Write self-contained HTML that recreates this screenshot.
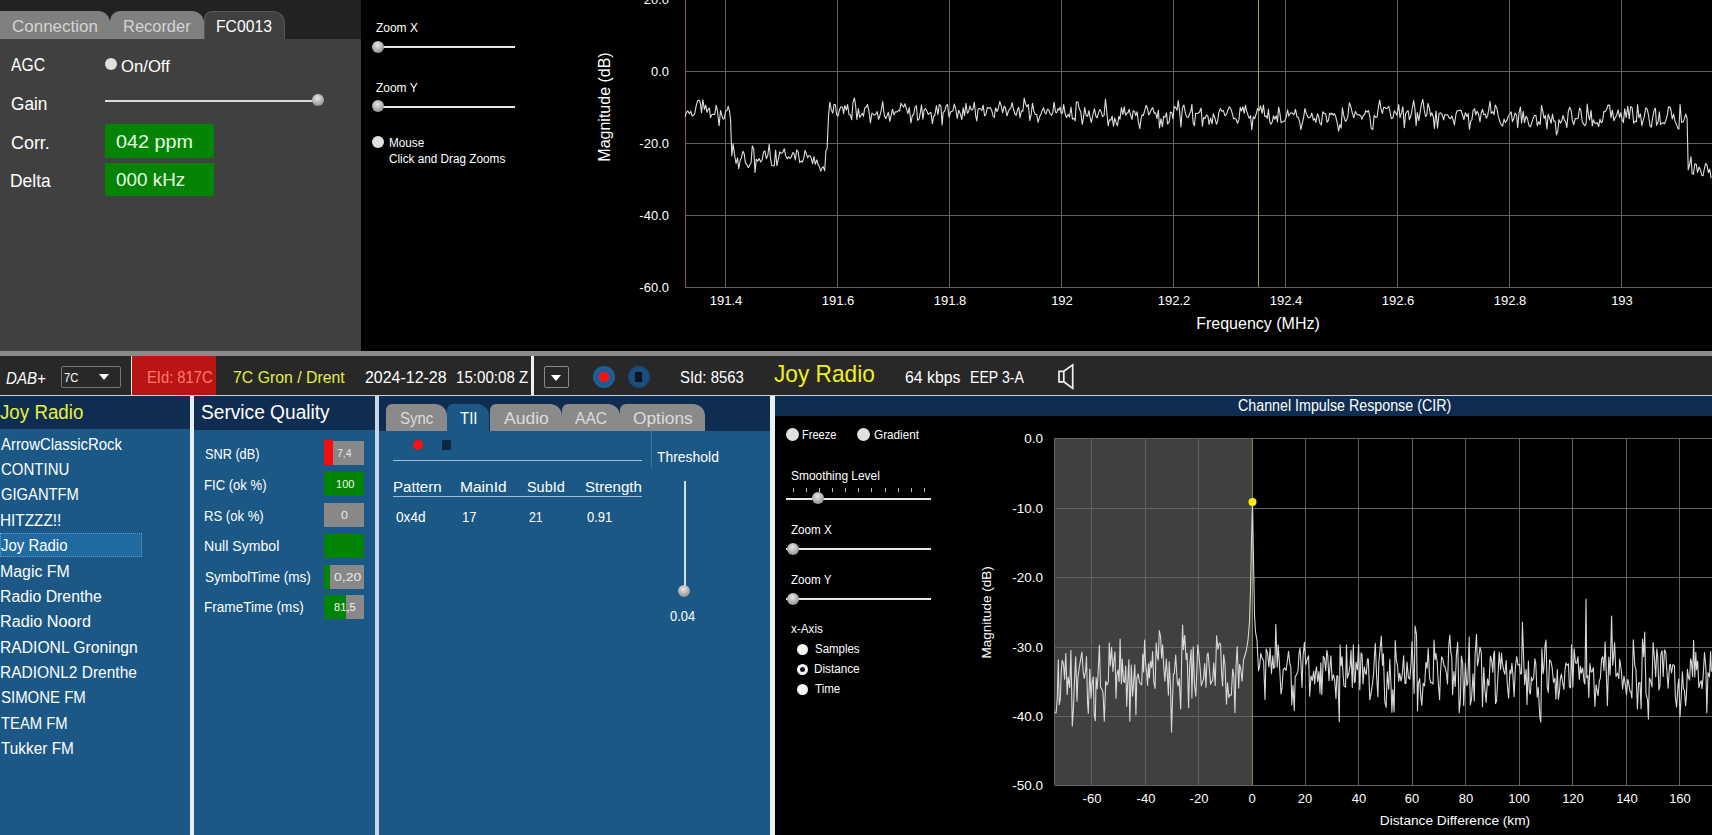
<!DOCTYPE html>
<html><head><meta charset="utf-8">
<style>
*{box-sizing:border-box}
html,body{margin:0;padding:0}
body{width:1712px;height:835px;overflow:hidden;position:relative;background:#000;font-family:"Liberation Sans",sans-serif;color:#fff}
.a{position:absolute}
.t{position:absolute;white-space:nowrap;line-height:1;transform-origin:0 0}
.knob{position:absolute;width:13px;height:13px;border-radius:50%;background:radial-gradient(circle at 45% 35%,#e8e8e8,#9a9a9a 70%,#666);}
.radio{position:absolute;width:13px;height:13px;border-radius:50%;background:#e0e0e0}
.track{position:absolute;height:3px;background:#e6e6e6}
</style></head><body>

<!-- ===== TOP LEFT PANEL ===== -->
<div class="a" style="left:0;top:0;width:361px;height:351px;background:#404040"></div>
<div class="a" style="left:0;top:0;width:361px;height:39px;background:#222"></div>
<div class="a" style="left:0;top:11px;width:110px;height:28px;background:#808080;border-top-right-radius:12px"></div>
<div class="a" style="left:110px;top:11px;width:94px;height:28px;background:#808080;border-top-left-radius:10px;border-top-right-radius:12px"></div>
<div class="a" style="left:204px;top:11px;width:81px;height:28px;background:#404040;border:1px solid #585858;border-bottom:none;border-top-left-radius:8px;border-top-right-radius:12px"></div>

<div class="radio" style="left:105px;top:58px;width:12px;height:12px"></div>
<div class="track" style="left:105px;top:99.5px;width:213px;height:2.2px;background:#dcdcdc"></div>
<div class="knob" style="left:312px;top:94px;width:12px;height:12px"></div>
<div class="a" style="left:105px;top:124px;width:109px;height:34px;background:#048404"></div>
<div class="a" style="left:105px;top:163px;width:109px;height:33px;background:#048404"></div>

<!-- ===== TOP MIDDLE (zoom controls) ===== -->
<div class="track" style="left:378px;top:46px;width:137px;height:2px"></div>
<div class="knob" style="left:372px;top:41px;width:12px;height:12px"></div>
<div class="track" style="left:378px;top:106px;width:137px;height:2px"></div>
<div class="knob" style="left:372px;top:100px;width:12px;height:12px"></div>
<div class="radio" style="left:372px;top:136px;width:12px;height:12px"></div>

<!-- ===== SPECTRUM PLOT ===== -->
<svg class="a" style="left:0;top:0" width="1712" height="351" viewBox="0 0 1712 351">
 <g stroke="#626262" stroke-width="1">
  <line x1="685" y1="71.5" x2="1712" y2="71.5"/>
  <line x1="685" y1="143.5" x2="1712" y2="143.5"/>
  <line x1="685" y1="215.5" x2="1712" y2="215.5"/>
  <line x1="685" y1="287.5" x2="1712" y2="287.5"/>
  <line x1="725.5" y1="0" x2="725.5" y2="287"/>
  <line x1="837.5" y1="0" x2="837.5" y2="287"/>
  <line x1="949.5" y1="0" x2="949.5" y2="287"/>
  <line x1="1061.5" y1="0" x2="1061.5" y2="287"/>
  <line x1="1173.5" y1="0" x2="1173.5" y2="287"/>
  <line x1="1285.5" y1="0" x2="1285.5" y2="287"/>
  <line x1="1397.5" y1="0" x2="1397.5" y2="287"/>
  <line x1="1509.5" y1="0" x2="1509.5" y2="287"/>
  <line x1="1621.5" y1="0" x2="1621.5" y2="287"/>
 </g>
 <line x1="685.5" y1="0" x2="685.5" y2="287" stroke="#a04858" stroke-width="1"/>
 <line x1="1258.5" y1="0" x2="1258.5" y2="287" stroke="#a0a048" stroke-width="1"/>
 <polyline fill="none" stroke="#dedede" stroke-width="1.1" stroke-linejoin="round" points="685.0,116.8 686.5,112.4 687.8,110.9 689.3,113.6 690.8,111.3 692.1,116.0 693.4,115.4 694.7,114.0 696.1,106.2 697.6,100.7 699.2,100.1 700.4,103.5 701.5,112.8 702.8,99.7 704.4,109.4 705.7,105.1 707.0,112.2 708.2,109.6 709.4,108.0 710.5,117.7 711.6,114.9 713.2,114.2 714.7,114.5 716.2,105.2 717.6,112.1 719.1,125.8 720.5,110.5 721.8,115.3 723.0,118.9 724.2,119.0 725.6,111.2 727.1,110.2 728.2,106.4 729.5,110.8 730.6,120.3 731.8,155.9 733.1,143.9 734.5,154.4 736.0,163.5 737.6,157.9 738.7,168.6 740.3,160.0 741.5,157.6 742.9,151.2 744.2,153.8 745.4,162.6 747.0,164.9 748.3,167.5 749.8,165.1 751.1,162.5 752.3,145.9 753.7,148.8 755.0,172.5 756.3,159.2 757.8,161.1 759.1,158.6 760.7,162.1 762.2,159.5 763.7,151.7 764.9,151.1 766.4,158.6 767.8,155.4 769.2,144.2 770.4,157.5 771.7,165.5 772.9,165.8 774.3,165.8 775.6,150.1 776.9,165.7 778.2,160.0 779.8,151.8 781.2,153.4 782.7,152.5 784.3,148.7 785.6,155.4 787.2,158.8 788.7,156.8 790.1,158.4 791.4,157.0 792.6,152.9 793.8,152.8 795.3,160.0 796.7,149.8 798.1,151.8 799.7,162.7 801.1,161.0 802.3,162.2 803.6,158.9 805.1,150.4 806.2,153.1 807.7,157.8 809.1,155.5 810.2,155.9 811.3,158.5 812.6,163.7 814.0,156.5 815.3,164.3 816.8,159.9 818.0,164.0 819.4,166.8 820.8,171.1 822.0,167.9 823.2,166.7 824.7,170.8 825.9,150.5 827.1,148.7 828.5,116.1 829.8,102.2 831.3,109.7 832.8,113.3 834.0,104.3 835.4,104.8 836.5,114.3 838.0,116.2 839.5,109.9 840.9,106.8 842.5,107.0 843.6,113.6 844.8,105.5 846.4,110.1 847.6,104.5 849.0,114.8 850.3,114.7 851.7,119.8 853.0,102.2 854.4,97.9 855.6,105.7 856.9,119.5 858.4,108.5 859.7,117.5 861.1,115.2 862.3,113.3 863.5,116.3 864.7,107.9 866.2,107.3 867.4,104.5 868.9,110.8 870.4,122.9 871.9,113.2 873.4,114.4 874.7,115.1 876.0,113.9 877.2,111.6 878.6,119.4 880.1,115.0 881.3,109.8 882.7,101.6 884.3,115.5 885.9,118.5 887.2,115.4 888.4,112.2 889.8,121.4 891.2,115.2 892.5,109.2 894.0,114.8 895.3,111.9 896.7,112.0 898.3,110.6 899.6,111.1 901.0,103.4 902.2,105.4 903.7,107.1 904.9,103.8 906.5,108.9 907.9,113.6 909.3,107.6 910.9,123.0 912.4,115.3 913.7,114.5 915.0,107.1 916.4,105.9 917.6,120.3 919.1,118.8 920.3,112.8 921.5,104.8 922.9,119.2 924.1,110.1 925.4,108.5 926.9,111.0 928.2,114.4 929.6,113.3 930.9,112.4 932.4,123.7 933.6,116.5 934.8,115.3 936.4,105.5 937.9,114.7 939.3,104.3 940.9,106.2 942.1,124.9 943.2,112.3 944.6,111.4 946.1,106.2 947.5,104.4 949.1,117.2 950.5,112.1 951.7,111.4 952.9,110.8 954.3,104.1 955.9,109.4 957.2,118.5 958.8,110.2 960.3,113.9 961.8,119.6 963.2,107.7 964.5,115.6 966.0,103.4 967.3,113.2 968.5,111.8 970.0,105.8 971.4,110.1 973.0,109.0 974.3,102.2 975.7,115.8 976.8,120.9 978.2,108.8 979.3,108.6 980.7,109.1 981.9,110.3 983.1,105.0 984.6,115.9 985.9,114.5 987.4,107.4 988.9,108.3 990.3,107.6 991.7,110.4 993.0,116.0 994.3,117.5 995.6,107.7 997.1,111.5 998.4,107.9 999.7,101.5 1001.2,105.8 1002.6,112.8 1004.1,106.1 1005.5,108.1 1007.0,115.9 1008.3,111.5 1009.5,109.4 1010.8,108.1 1012.2,102.7 1013.6,110.0 1015.1,114.3 1016.3,115.2 1017.7,109.1 1018.8,107.4 1020.0,117.6 1021.5,110.7 1022.9,111.3 1024.2,98.1 1025.6,104.0 1026.8,106.9 1028.3,104.5 1029.8,120.4 1031.1,115.0 1032.5,103.4 1034.0,111.6 1035.4,114.4 1036.7,114.5 1038.1,122.3 1039.7,116.4 1041.0,114.4 1042.1,110.6 1043.6,107.7 1044.8,112.6 1046.0,113.8 1047.4,109.2 1048.8,110.2 1050.3,114.0 1051.6,115.4 1052.9,111.6 1054.1,102.0 1055.5,112.3 1056.7,112.8 1057.9,108.6 1059.0,110.1 1060.2,107.1 1061.3,113.8 1062.5,112.7 1063.7,104.6 1065.0,113.6 1066.5,117.6 1068.1,114.2 1069.5,117.0 1071.0,107.0 1072.4,119.2 1074.0,118.3 1075.2,120.8 1076.3,102.0 1077.9,102.1 1079.3,108.8 1080.7,111.8 1082.3,124.5 1083.5,117.4 1084.7,107.5 1086.1,115.3 1087.6,116.4 1088.9,110.7 1090.1,117.9 1091.3,122.4 1092.9,115.0 1094.4,108.7 1096.0,116.7 1097.1,117.8 1098.3,113.4 1099.8,109.4 1101.0,111.6 1102.6,116.6 1104.0,115.6 1105.5,99.0 1106.9,113.4 1108.2,125.8 1109.4,119.7 1110.9,120.1 1112.1,116.1 1113.5,126.2 1114.7,118.0 1116.1,122.7 1117.4,125.8 1118.9,116.4 1120.0,119.2 1121.4,107.6 1122.9,114.4 1124.2,106.8 1125.6,115.3 1126.8,113.1 1128.0,112.8 1129.2,109.3 1130.5,114.6 1132.0,119.3 1133.2,110.8 1134.6,111.4 1135.8,115.6 1137.1,111.7 1138.2,120.9 1139.8,128.6 1140.9,119.7 1142.1,114.7 1143.3,115.5 1144.8,110.4 1146.1,105.3 1147.4,108.2 1148.7,114.9 1149.8,113.4 1151.4,109.3 1152.8,107.6 1154.2,113.1 1155.6,112.9 1157.0,118.4 1158.4,110.2 1159.5,127.9 1161.0,118.7 1162.4,126.7 1163.7,116.4 1165.0,117.2 1166.5,112.9 1167.6,124.0 1169.2,121.9 1170.4,112.0 1171.9,112.7 1173.0,118.6 1174.2,106.4 1175.8,107.8 1177.0,110.2 1178.3,100.6 1179.7,112.5 1180.9,126.9 1182.4,107.9 1183.9,105.0 1185.4,113.4 1186.9,117.1 1188.3,117.3 1189.6,113.7 1190.8,111.3 1191.9,104.4 1193.1,122.8 1194.4,125.8 1195.6,113.3 1196.9,113.5 1198.1,113.2 1199.6,112.0 1201.1,108.0 1202.4,126.3 1203.6,117.5 1204.9,118.7 1206.5,115.0 1207.9,116.2 1209.1,124.4 1210.6,118.1 1212.1,123.8 1213.3,113.7 1214.8,117.7 1216.4,124.2 1217.5,121.7 1218.9,112.4 1220.3,108.6 1221.9,111.3 1223.4,110.6 1224.9,115.7 1226.5,114.4 1227.8,110.3 1229.4,106.7 1231.0,109.2 1232.3,113.6 1233.6,118.9 1234.9,118.2 1236.1,119.3 1237.5,123.2 1239.0,119.4 1240.2,107.2 1241.4,111.0 1242.9,106.7 1244.2,113.3 1245.4,105.3 1246.8,111.6 1248.1,115.4 1249.2,118.3 1250.6,115.7 1251.8,129.8 1253.2,116.7 1254.7,118.7 1256.3,113.5 1257.5,108.5 1259.1,110.6 1260.5,105.8 1262.1,113.4 1263.4,105.0 1264.9,116.6 1266.2,115.9 1267.3,118.5 1268.4,109.3 1269.7,121.4 1270.8,124.2 1272.1,122.4 1273.6,115.7 1274.8,119.2 1276.3,115.8 1277.5,121.9 1278.6,107.0 1279.7,112.1 1281.1,122.6 1282.3,121.9 1283.6,121.4 1284.7,120.9 1286.2,117.2 1287.6,109.9 1288.8,116.1 1290.4,113.3 1291.8,112.7 1292.9,113.8 1294.0,114.7 1295.5,109.4 1297.0,117.2 1298.2,117.2 1299.7,121.9 1300.9,129.6 1302.2,123.7 1303.6,117.8 1304.9,108.5 1306.3,113.5 1307.9,117.0 1309.1,117.9 1310.7,116.7 1311.8,113.0 1313.4,120.3 1314.6,118.4 1315.9,122.2 1317.5,113.7 1318.7,116.6 1320.0,123.4 1321.4,124.9 1322.8,111.7 1324.3,113.6 1325.7,113.8 1327.1,122.3 1328.4,120.4 1329.7,113.0 1330.9,114.7 1332.0,113.1 1333.3,115.3 1334.5,113.6 1335.7,116.5 1337.3,123.3 1338.6,131.2 1339.9,124.5 1341.1,128.1 1342.4,107.9 1343.9,116.5 1345.4,121.4 1346.7,119.9 1347.9,116.3 1349.3,102.8 1350.7,106.2 1352.3,112.9 1353.8,117.8 1355.4,111.4 1356.9,114.3 1358.3,115.1 1359.5,114.9 1360.8,115.9 1361.9,119.3 1363.5,115.0 1364.6,114.5 1365.8,110.5 1367.2,112.2 1368.5,110.5 1369.9,116.9 1371.2,128.3 1372.8,129.7 1374.2,115.2 1375.8,117.4 1377.1,117.0 1378.6,105.6 1379.7,100.1 1380.8,108.0 1382.4,113.5 1383.6,107.4 1384.8,107.4 1386.1,108.6 1387.3,108.2 1388.8,106.3 1390.0,111.8 1391.4,118.7 1392.9,118.1 1394.3,110.7 1395.7,112.9 1397.1,115.3 1398.7,104.5 1400.0,117.7 1401.5,112.9 1402.9,106.7 1404.3,127.8 1405.6,113.7 1406.9,111.8 1408.1,110.6 1409.4,119.7 1411.0,115.3 1412.6,106.4 1413.7,100.5 1414.9,108.6 1416.1,125.7 1417.3,112.5 1418.8,120.7 1420.1,112.5 1421.2,105.1 1422.8,99.4 1424.3,110.4 1425.6,116.5 1426.8,115.0 1427.9,103.3 1429.4,108.2 1430.6,116.1 1431.8,112.7 1433.3,116.9 1434.4,128.4 1436.0,111.0 1437.5,128.0 1439.1,113.4 1440.6,112.8 1442.1,114.4 1443.6,119.9 1444.8,114.7 1446.2,115.0 1447.8,114.9 1449.0,117.8 1450.5,118.7 1451.8,115.9 1453.3,120.2 1454.4,125.0 1456.0,114.0 1457.1,110.8 1458.4,110.7 1459.8,110.3 1461.0,110.4 1462.4,114.5 1463.9,119.7 1465.4,112.7 1467.0,116.5 1468.2,113.6 1469.4,129.3 1470.8,121.0 1471.9,119.8 1473.1,110.9 1474.6,108.7 1475.8,114.9 1477.1,111.2 1478.4,113.6 1480.0,121.8 1481.2,113.0 1482.5,109.3 1483.7,114.7 1485.2,113.9 1486.4,118.3 1487.7,115.4 1488.8,108.9 1490.0,101.4 1491.2,113.5 1492.8,111.7 1494.0,114.6 1495.3,105.1 1496.8,107.9 1498.2,115.9 1499.8,121.6 1501.4,124.9 1502.6,126.1 1504.1,119.1 1505.4,122.5 1506.8,120.6 1508.3,116.2 1509.9,114.0 1511.2,111.9 1512.4,121.6 1513.6,119.0 1515.1,113.1 1516.6,115.2 1517.7,127.7 1519.1,112.3 1520.5,107.0 1521.6,123.1 1523.2,111.4 1524.5,122.7 1526.1,116.2 1527.4,118.5 1528.9,125.3 1530.3,126.9 1531.5,123.8 1533.1,118.4 1534.5,115.6 1535.9,115.3 1537.3,125.7 1538.7,121.7 1540.2,124.5 1541.5,105.6 1542.8,111.2 1544.1,118.4 1545.4,115.5 1546.9,128.9 1548.2,114.3 1549.7,118.4 1551.1,123.3 1552.5,114.0 1553.7,120.9 1555.1,121.2 1556.5,134.9 1557.8,130.8 1559.0,119.6 1560.5,123.0 1561.6,121.4 1563.1,115.5 1564.4,120.4 1565.5,121.4 1566.9,127.5 1568.2,112.0 1569.7,107.2 1571.2,110.7 1572.3,119.9 1573.7,124.8 1575.3,118.5 1576.7,118.7 1578.2,118.1 1579.5,108.1 1580.8,109.9 1582.2,121.3 1583.5,123.9 1584.8,125.7 1586.1,123.5 1587.2,104.1 1588.4,114.9 1589.6,120.0 1591.1,110.3 1592.3,126.0 1593.4,119.8 1594.6,122.7 1596.0,123.6 1597.2,122.4 1598.7,126.6 1600.0,119.1 1601.1,122.7 1602.4,121.7 1604.0,111.2 1605.1,111.7 1606.6,109.5 1608.0,105.1 1609.6,105.4 1611.0,117.6 1612.3,110.0 1613.9,120.7 1615.2,117.7 1616.6,115.5 1618.1,109.8 1619.6,117.5 1620.9,112.8 1622.2,119.7 1623.4,122.6 1624.7,108.8 1626.2,117.4 1627.8,106.3 1629.2,118.7 1630.7,106.6 1632.2,107.8 1633.7,123.2 1635.2,121.0 1636.4,121.9 1637.6,104.5 1638.9,117.8 1640.4,113.9 1641.9,125.6 1643.1,120.6 1644.2,116.9 1645.8,107.9 1647.3,109.4 1648.6,115.7 1649.9,125.3 1651.3,127.2 1652.6,118.1 1654.1,110.3 1655.4,108.3 1656.5,125.2 1658.1,122.1 1659.4,111.7 1660.5,124.5 1661.8,123.3 1663.4,122.9 1664.5,123.8 1665.7,121.0 1667.3,115.1 1668.5,107.1 1669.9,106.9 1671.0,110.0 1672.2,119.0 1673.6,114.1 1674.9,120.9 1676.5,124.2 1677.6,127.9 1678.9,129.2 1680.1,104.5 1681.6,122.4 1683.2,121.7 1684.4,118.9 1685.7,114.2 1687.1,118.1 1688.2,169.8 1689.5,165.0 1691.0,156.7 1692.1,173.4 1693.4,174.3 1694.8,163.9 1696.3,164.3 1697.5,172.5 1699.1,166.9 1700.4,169.7 1701.8,175.4 1703.1,175.6 1704.2,169.4 1705.7,163.5 1707.0,165.2 1708.4,172.6 1709.7,169.1 1711.1,178.2"/>
 <g fill="#fff" font-family="Liberation Sans" font-size="13" text-anchor="end">
  <text x="669" y="4">20.0</text>
  <text x="669" y="76">0.0</text>
  <text x="669" y="148">-20.0</text>
  <text x="669" y="220">-40.0</text>
  <text x="669" y="292">-60.0</text>
 </g>
 <g fill="#fff" font-family="Liberation Sans" font-size="13" text-anchor="middle">
  <text x="726" y="305">191.4</text>
  <text x="838" y="305">191.6</text>
  <text x="950" y="305">191.8</text>
  <text x="1062" y="305">192</text>
  <text x="1174" y="305">192.2</text>
  <text x="1286" y="305">192.4</text>
  <text x="1398" y="305">192.6</text>
  <text x="1510" y="305">192.8</text>
  <text x="1622" y="305">193</text>
  <text x="1258" y="329" font-size="16">Frequency (MHz)</text>
  <text transform="translate(610,107) rotate(-90)" font-size="16">Magnitude (dB)</text>
 </g>
</svg>

<!-- ===== SEPARATOR + STATUS BAR ===== -->
<div class="a" style="left:0;top:351px;width:1712px;height:5px;background:#8a8a8a"></div>
<div class="a" style="left:0;top:356px;width:1712px;height:39px;background:#282828"></div>
<div class="a" style="left:0;top:395px;width:1712px;height:1px;background:#c8d0d8"></div>
<div class="a" style="left:61px;top:366px;width:60px;height:22px;border:1px solid #777;border-radius:2px"></div>
<div class="a" style="left:99px;top:374px;width:0;height:0;border-left:5px solid transparent;border-right:5px solid transparent;border-top:6px solid #fff"></div>
<div class="a" style="left:131px;top:356px;width:1px;height:39px;background:#ddd"></div>
<div class="a" style="left:132px;top:356px;width:84px;height:39px;background:#bb1414"></div>
<div class="a" style="left:531px;top:356px;width:3px;height:39px;background:#f0f0f0"></div>
<div class="a" style="left:544px;top:366px;width:25px;height:22px;border:1px solid #888;border-radius:2px"></div>
<div class="a" style="left:551px;top:375px;width:0;height:0;border-left:5px solid transparent;border-right:5px solid transparent;border-top:6px solid #fff"></div>
<div class="a" style="left:593px;top:366px;width:22px;height:22px;border-radius:50%;background:#1f5f96"></div>
<div class="a" style="left:596px;top:369px;width:16px;height:16px;border-radius:50%;border:1.5px solid #1a5488"></div>
<div class="a" style="left:599px;top:372px;width:10px;height:10px;border-radius:50%;background:#ff1010"></div>
<div class="a" style="left:628px;top:366px;width:22px;height:22px;border-radius:50%;background:#1a4a78"></div>
<div class="a" style="left:631px;top:369px;width:16px;height:16px;border-radius:50%;border:1.5px solid #1d5a90"></div>
<div class="a" style="left:635px;top:372px;width:7px;height:10px;background:#0c1820"></div>
<svg class="a" style="left:1055px;top:358px" width="24" height="36" viewBox="0 0 24 36">
 <path d="M4,13.3 H8.8 V23.8 H4 Z M8.8,13.3 L17.7,6.9 V30.4 L8.8,23.8" fill="none" stroke="#f0f0f0" stroke-width="1.7" stroke-linejoin="miter"/>
</svg>

<!-- ===== BOTTOM PANELS ===== -->
<!-- service list -->
<div class="a" style="left:0;top:396px;width:190px;height:439px;background:#1b5886"></div>
<div class="a" style="left:0;top:396px;width:190px;height:33px;background:#0f2d50"></div>
<div class="a" style="left:0;top:533px;width:142px;height:24px;background:#1f6aa0;border:1px dotted #5a9ccc"></div>
<div class="a" style="left:190px;top:396px;width:4px;height:439px;background:#e8f0f8"></div>

<!-- service quality -->
<div class="a" style="left:194px;top:396px;width:181px;height:439px;background:#1b5886"></div>
<div class="a" style="left:194px;top:396px;width:181px;height:34px;background:#0f2d50"></div>
<div class="a" style="left:324px;top:441px;width:40px;height:24px;background:#888"></div>
<div class="a" style="left:324px;top:440px;width:9px;height:25px;background:#f01010"></div>
<div class="a" style="left:324px;top:472px;width:40px;height:24px;background:#048404"></div>
<div class="a" style="left:324px;top:503px;width:40px;height:24px;background:#888"></div>
<div class="a" style="left:324px;top:534px;width:40px;height:24px;background:#048404"></div>
<div class="a" style="left:324px;top:565px;width:40px;height:24px;background:#888"></div>
<div class="a" style="left:324px;top:565px;width:6px;height:24px;background:#048404"></div>
<div class="a" style="left:324px;top:595px;width:40px;height:24px;background:#888"></div>
<div class="a" style="left:324px;top:595px;width:22px;height:24px;background:#048404"></div>
<div class="a" style="left:375px;top:396px;width:4px;height:439px;background:#c8d8e8"></div>

<!-- tabs panel -->
<div class="a" style="left:379px;top:396px;width:391px;height:439px;background:#1b5886"></div>
<div class="a" style="left:379px;top:396px;width:391px;height:35px;background:#0f2d50"></div>
<div class="a" style="left:386px;top:404px;width:61px;height:27px;background:#8a8a8a;border-top-left-radius:6px;border-top-right-radius:12px"></div>
<div class="a" style="left:447px;top:404px;width:42px;height:27px;background:#1b5886;border-top-left-radius:6px;border-top-right-radius:12px"></div>
<div class="a" style="left:490px;top:404px;width:72px;height:27px;background:#8a8a8a;border-top-left-radius:6px;border-top-right-radius:12px"></div>
<div class="a" style="left:562px;top:404px;width:58px;height:27px;background:#8a8a8a;border-top-left-radius:6px;border-top-right-radius:12px"></div>
<div class="a" style="left:620px;top:404px;width:85px;height:27px;background:#8a8a8a;border-top-left-radius:6px;border-top-right-radius:12px"></div>
<div class="a" style="left:413px;top:440px;width:10px;height:10px;border-radius:50%;background:#ff1010"></div>
<div class="a" style="left:442px;top:440px;width:9px;height:10px;background:#0c2840"></div>
<div class="a" style="left:393px;top:460px;width:249px;height:1px;background:#a0c0dc"></div>
<div class="a" style="left:651px;top:431px;width:1px;height:36px;background:#3a78a8"></div>
<div class="a" style="left:393px;top:496px;width:249px;height:1px;background:#a0c0dc"></div>
<div class="a" style="left:683.5px;top:481px;width:2px;height:105px;background:#dcdcdc"></div>
<div class="knob" style="left:678px;top:585px;width:12px;height:12px"></div>
<div class="a" style="left:770px;top:396px;width:5px;height:439px;background:#e8f0f8"></div>

<!-- CIR panel -->
<div class="a" style="left:775px;top:396px;width:937px;height:20px;background:#0f2d50"></div>
<div class="radio" style="left:786px;top:428px"></div>
<div class="radio" style="left:857px;top:428px"></div>
<div class="a" style="left:792.5px;top:488px;width:1px;height:4px;background:#bbb"></div><div class="a" style="left:805.6px;top:488px;width:1px;height:4px;background:#bbb"></div><div class="a" style="left:818.8px;top:488px;width:1px;height:4px;background:#bbb"></div><div class="a" style="left:832.0px;top:488px;width:1px;height:4px;background:#bbb"></div><div class="a" style="left:845.1px;top:488px;width:1px;height:4px;background:#bbb"></div><div class="a" style="left:858.2px;top:488px;width:1px;height:4px;background:#bbb"></div><div class="a" style="left:871.4px;top:488px;width:1px;height:4px;background:#bbb"></div><div class="a" style="left:884.5px;top:488px;width:1px;height:4px;background:#bbb"></div><div class="a" style="left:897.7px;top:488px;width:1px;height:4px;background:#bbb"></div><div class="a" style="left:910.9px;top:488px;width:1px;height:4px;background:#bbb"></div><div class="a" style="left:924.0px;top:488px;width:1px;height:4px;background:#bbb"></div>
<div class="track" style="left:786px;top:498px;width:145px;height:2px"></div>
<div class="knob" style="left:812px;top:492px;width:12px;height:12px"></div>
<div class="track" style="left:786px;top:548px;width:145px;height:2px"></div>
<div class="knob" style="left:787px;top:543px;width:12px;height:12px"></div>
<div class="track" style="left:786px;top:598px;width:145px;height:2px"></div>
<div class="knob" style="left:787px;top:593px;width:12px;height:12px"></div>
<div class="radio" style="left:797px;top:643.5px;width:11px;height:11px;background:#f8f8f8"></div>
<div class="radio" style="left:797px;top:663.5px;width:11px;height:11px;border:3.2px solid #f8f8f8;background:#1a1a1a"></div>
<div class="radio" style="left:797px;top:683.5px;width:11px;height:11px;background:#f8f8f8"></div>

<svg class="a" style="left:0;top:0" width="1712" height="835" viewBox="0 0 1712 835">
 <rect x="1055" y="438" width="197" height="347" fill="#404040"/>
 <g stroke="#626262" stroke-width="1">
  <line x1="1055" y1="438.5" x2="1712" y2="438.5"/>
  <line x1="1055" y1="508.5" x2="1712" y2="508.5"/>
  <line x1="1055" y1="577.5" x2="1712" y2="577.5"/>
  <line x1="1055" y1="647.5" x2="1712" y2="647.5"/>
  <line x1="1055" y1="716.5" x2="1712" y2="716.5"/>
  <line x1="1055" y1="785.5" x2="1712" y2="785.5"/>
  <line x1="1054.5" y1="438" x2="1054.5" y2="785"/>
  <line x1="1091.5" y1="438" x2="1091.5" y2="785"/>
  <line x1="1145.5" y1="438" x2="1145.5" y2="785"/>
  <line x1="1198.5" y1="438" x2="1198.5" y2="785"/>
  <line x1="1305.5" y1="438" x2="1305.5" y2="785"/>
  <line x1="1358.5" y1="438" x2="1358.5" y2="785"/>
  <line x1="1412.5" y1="438" x2="1412.5" y2="785"/>
  <line x1="1465.5" y1="438" x2="1465.5" y2="785"/>
  <line x1="1519.5" y1="438" x2="1519.5" y2="785"/>
  <line x1="1572.5" y1="438" x2="1572.5" y2="785"/>
  <line x1="1626.5" y1="438" x2="1626.5" y2="785"/>
  <line x1="1679.5" y1="438" x2="1679.5" y2="785"/>
 </g>
 <line x1="1252.5" y1="438" x2="1252.5" y2="785" stroke="#8a8a50" stroke-width="1"/>
 <polyline fill="none" stroke="#d8d8d8" stroke-width="1.1" stroke-linejoin="round" points="1055.0,712.2 1056.1,713.0 1057.3,697.9 1058.3,659.8 1059.2,704.7 1060.3,699.6 1061.3,670.0 1062.2,660.3 1063.5,664.1 1064.6,679.2 1065.8,653.5 1067.2,694.5 1068.2,677.1 1069.7,687.6 1070.9,650.3 1072.3,725.9 1073.4,709.3 1074.5,681.0 1075.7,656.7 1077.0,701.2 1077.9,677.3 1079.0,669.1 1080.5,660.4 1081.9,652.1 1083.2,671.9 1084.3,678.5 1085.6,670.8 1086.5,656.5 1087.5,701.1 1088.3,713.4 1089.8,669.0 1091.0,698.1 1092.0,684.1 1093.3,676.9 1094.2,714.3 1095.3,720.8 1096.1,677.7 1097.2,688.9 1098.3,669.3 1099.4,645.3 1100.5,686.9 1101.9,689.2 1103.0,692.6 1104.3,721.1 1105.7,681.2 1107.0,685.1 1108.3,682.0 1109.3,642.9 1110.3,665.7 1111.6,647.4 1112.9,671.5 1114.2,657.8 1115.0,651.8 1116.0,698.2 1116.9,674.9 1118.0,669.8 1119.1,681.5 1120.1,639.1 1121.4,683.7 1122.3,659.1 1123.5,681.1 1124.6,682.5 1125.7,666.0 1126.7,706.2 1128.1,674.0 1128.9,659.9 1129.8,721.2 1131.3,665.0 1132.5,696.1 1133.3,687.0 1134.8,664.7 1135.9,714.8 1136.8,678.2 1138.1,673.9 1139.4,681.7 1140.4,683.6 1141.7,684.8 1142.8,654.1 1143.6,672.0 1144.6,640.0 1145.6,663.4 1146.7,672.9 1147.6,685.3 1148.5,663.9 1149.4,677.9 1150.4,661.3 1151.7,667.7 1152.6,651.7 1153.8,682.0 1155.1,688.5 1156.2,643.0 1157.4,656.7 1158.3,660.1 1159.3,630.5 1160.6,636.9 1161.6,657.9 1162.6,644.7 1163.6,665.3 1164.9,681.1 1166.3,659.0 1167.4,675.9 1168.4,695.1 1169.2,661.8 1170.5,686.5 1171.5,731.9 1172.6,697.3 1173.4,674.1 1174.3,673.6 1175.7,655.1 1177.2,681.3 1178.1,685.8 1179.2,678.6 1180.7,708.9 1181.7,656.9 1182.6,625.1 1183.4,649.6 1184.7,635.2 1186.1,659.4 1187.1,653.4 1188.6,707.7 1189.6,667.3 1191.1,649.8 1191.9,698.0 1193.2,646.8 1194.4,684.0 1195.8,696.3 1196.8,672.6 1197.8,644.8 1198.8,653.2 1200.2,669.6 1201.3,685.7 1202.1,682.9 1203.5,679.6 1204.7,663.6 1206.0,687.3 1207.1,655.2 1208.1,653.0 1209.5,670.0 1210.6,684.2 1211.7,681.2 1212.7,680.8 1213.8,662.9 1215.2,685.5 1216.6,635.8 1217.9,649.3 1219.3,642.9 1220.6,644.6 1221.6,673.0 1222.6,686.0 1223.7,654.8 1225.0,665.4 1226.5,703.9 1227.5,682.8 1228.9,697.4 1229.9,694.8 1231.3,695.2 1232.7,669.0 1233.8,675.3 1234.9,712.6 1236.1,665.3 1237.2,646.5 1238.7,688.0 1239.5,664.5 1240.7,668.7 1242.1,681.3 1243.5,660.0 1246.0,652.0 1248.0,640.0 1249.5,622.0 1250.5,590.0 1251.5,540.0 1252.5,502.0 1253.5,560.0 1254.5,615.0 1255.5,632.0 1257.0,640.0 1258.5,670.8 1259.5,666.9 1260.8,653.4 1262.2,658.4 1263.6,660.8 1265.0,699.6 1266.2,648.9 1267.6,653.4 1268.9,667.0 1270.1,647.7 1271.5,673.4 1272.8,655.8 1273.7,668.5 1274.8,667.0 1275.8,624.4 1277.2,667.1 1278.2,645.0 1279.6,666.6 1281.0,693.9 1282.0,687.9 1283.2,669.9 1284.6,667.8 1286.0,670.5 1287.0,663.9 1288.5,651.4 1289.9,664.3 1290.8,666.6 1291.8,704.6 1293.0,685.3 1294.3,710.6 1295.2,676.6 1296.6,674.7 1298.0,670.6 1299.0,653.8 1300.0,648.3 1300.9,662.0 1302.0,687.3 1303.1,655.7 1304.4,642.4 1305.8,664.6 1307.2,659.3 1308.6,655.8 1309.7,696.3 1311.0,676.0 1312.3,680.4 1313.7,671.3 1314.7,684.0 1315.6,671.9 1316.5,666.9 1317.7,681.7 1319.0,671.6 1320.0,693.3 1320.8,662.8 1321.8,694.4 1323.3,656.4 1324.5,658.3 1325.7,670.6 1326.8,650.3 1327.7,654.9 1329.0,680.6 1329.8,668.5 1330.9,655.8 1332.1,680.4 1333.5,674.7 1334.7,680.6 1336.0,698.6 1336.8,675.9 1337.9,676.1 1339.3,721.7 1340.1,645.1 1341.1,665.6 1342.1,656.8 1343.1,674.7 1344.0,686.1 1345.5,687.0 1346.5,645.0 1347.4,678.2 1348.8,673.3 1350.2,664.9 1351.0,650.4 1352.3,687.4 1353.3,644.8 1354.3,682.6 1355.2,681.2 1356.0,662.2 1357.4,669.6 1358.6,644.5 1359.8,689.7 1361.1,652.9 1362.1,654.8 1363.0,683.9 1364.3,666.7 1365.3,672.6 1366.3,674.4 1367.5,658.7 1368.3,659.0 1369.8,699.8 1371.1,693.1 1372.4,683.9 1373.6,673.6 1374.5,654.8 1375.3,643.4 1376.6,675.8 1377.9,696.8 1378.8,662.9 1380.1,649.2 1381.3,636.1 1382.5,665.4 1383.4,653.9 1384.8,701.6 1386.1,707.5 1387.3,671.7 1388.7,689.3 1389.8,659.4 1391.1,687.2 1391.9,712.2 1392.8,689.8 1394.1,711.9 1395.2,640.6 1396.4,660.7 1397.5,665.3 1398.7,681.3 1399.7,673.2 1401.0,681.1 1402.2,675.5 1403.6,655.8 1404.9,683.2 1405.9,683.6 1407.0,662.0 1408.4,677.4 1409.8,679.1 1411.1,663.1 1412.0,641.5 1413.2,668.5 1414.1,693.5 1415.1,626.0 1416.5,634.5 1417.5,711.0 1418.4,683.3 1419.7,678.6 1420.8,696.6 1421.8,705.4 1423.2,683.3 1424.6,685.9 1425.9,662.2 1427.1,668.3 1428.2,648.5 1429.6,677.8 1430.9,682.8 1431.9,682.6 1433.1,684.1 1434.0,640.1 1435.1,659.7 1435.9,653.5 1437.1,661.2 1438.1,679.4 1439.6,699.7 1440.5,673.3 1441.6,656.8 1442.8,659.1 1444.2,666.6 1445.0,666.5 1446.5,673.8 1447.5,683.9 1448.8,645.3 1449.8,635.1 1450.8,651.5 1451.8,657.7 1452.6,694.7 1453.9,671.5 1455.2,686.4 1456.4,655.1 1457.7,642.1 1459.2,712.6 1460.4,699.4 1461.4,656.0 1462.7,663.4 1463.7,705.8 1464.5,686.6 1465.4,663.1 1466.8,685.5 1467.8,683.0 1469.2,637.1 1470.3,704.9 1471.5,699.4 1473.0,673.9 1474.3,701.0 1475.1,655.2 1476.5,634.4 1477.5,666.0 1478.6,659.4 1480.0,647.3 1481.3,652.6 1482.5,706.6 1483.8,667.5 1484.8,688.3 1486.1,702.4 1487.5,679.1 1488.9,685.8 1490.4,656.1 1491.7,661.0 1492.8,672.3 1493.7,654.6 1494.5,651.1 1495.5,703.6 1496.5,701.2 1498.0,675.4 1499.2,652.2 1500.6,669.4 1501.5,653.2 1502.4,663.0 1503.8,670.9 1504.9,674.3 1506.2,660.5 1507.2,682.8 1508.6,698.1 1510.0,670.1 1511.0,673.5 1511.9,663.4 1512.8,673.2 1514.1,696.7 1515.4,667.0 1516.7,656.5 1518.1,665.1 1519.6,664.4 1520.4,674.0 1521.5,673.4 1522.4,622.0 1523.7,659.6 1524.7,684.8 1526.1,669.5 1527.0,704.6 1528.4,661.0 1529.3,691.1 1530.4,694.0 1531.4,677.1 1532.2,680.6 1533.6,678.2 1534.9,658.9 1535.8,663.8 1537.2,697.2 1538.3,687.5 1539.8,716.5 1540.8,722.1 1541.9,648.7 1543.0,673.7 1543.8,669.3 1545.1,645.1 1546.0,640.0 1547.2,686.9 1548.3,692.4 1549.6,659.8 1551.0,661.6 1552.1,667.3 1553.5,682.3 1554.9,678.3 1555.9,698.9 1557.3,669.6 1558.3,699.3 1559.4,692.0 1560.4,678.1 1561.4,674.1 1562.5,681.7 1563.9,689.5 1565.0,670.1 1565.9,662.9 1567.1,665.4 1568.5,663.9 1569.4,686.7 1570.6,687.8 1571.5,644.9 1572.8,687.1 1574.1,648.7 1575.5,663.0 1576.8,663.3 1577.9,656.8 1579.3,679.5 1580.4,666.1 1581.3,673.2 1582.7,668.0 1584.0,681.5 1584.9,684.1 1586.0,599.0 1586.8,677.6 1587.9,675.7 1588.8,697.4 1589.9,663.5 1591.1,671.9 1592.0,671.7 1593.4,667.7 1594.9,706.5 1596.1,684.8 1597.2,691.4 1598.1,695.6 1599.3,681.0 1600.3,678.5 1601.6,659.1 1602.8,656.8 1604.0,670.5 1605.1,642.1 1606.6,680.9 1607.4,705.5 1608.8,657.0 1610.1,675.1 1611.6,616.0 1612.7,665.1 1613.6,656.0 1614.6,642.8 1616.0,676.6 1617.5,673.1 1618.8,678.6 1619.7,659.4 1621.2,669.5 1622.6,688.9 1624.0,676.0 1625.3,684.8 1626.5,695.0 1627.7,679.3 1628.5,682.0 1629.9,691.1 1630.8,691.6 1631.9,698.1 1633.3,639.7 1634.8,665.6 1635.9,668.9 1637.4,709.0 1638.6,683.1 1640.0,682.4 1641.1,708.7 1642.5,639.2 1643.7,656.7 1644.7,632.1 1646.0,693.6 1647.5,699.8 1648.4,719.0 1649.4,678.0 1650.6,680.7 1652.0,686.9 1653.1,642.6 1654.5,658.6 1655.7,676.7 1656.8,649.0 1657.8,657.2 1658.9,690.1 1660.0,685.4 1660.8,654.5 1662.1,650.7 1663.2,676.4 1664.5,649.7 1665.8,652.8 1666.6,666.8 1668.1,688.2 1669.6,665.0 1670.4,664.3 1671.5,673.0 1672.9,664.5 1674.4,665.6 1675.4,698.0 1676.6,707.0 1678.0,685.3 1678.8,678.8 1680.0,716.8 1681.2,696.5 1682.4,671.7 1683.4,688.8 1684.4,690.4 1685.6,705.6 1686.4,695.6 1687.4,669.4 1688.5,677.6 1689.6,680.1 1690.6,658.7 1691.4,661.4 1692.6,676.6 1693.6,640.3 1694.8,676.9 1695.8,652.4 1696.6,669.6 1697.7,661.0 1698.9,687.5 1700.1,682.7 1701.2,680.8 1702.0,688.7 1703.1,677.4 1704.5,652.5 1705.9,668.2 1706.8,712.7 1708.0,672.6 1709.5,676.9 1710.6,651.5 1711.4,671.5"/>
 <circle cx="1252.5" cy="502" r="4" fill="#ffee00"/>
 <g fill="#fff" font-family="Liberation Sans" font-size="13.5" text-anchor="end">
  <text x="1043" y="443">0.0</text>
  <text x="1043" y="513">-10.0</text>
  <text x="1043" y="582">-20.0</text>
  <text x="1043" y="652">-30.0</text>
  <text x="1043" y="721">-40.0</text>
  <text x="1043" y="790">-50.0</text>
 </g>
 <g fill="#fff" font-family="Liberation Sans" font-size="13" text-anchor="middle">
  <text x="1092" y="803">-60</text>
  <text x="1146" y="803">-40</text>
  <text x="1199" y="803">-20</text>
  <text x="1252" y="803">0</text>
  <text x="1305" y="803">20</text>
  <text x="1359" y="803">40</text>
  <text x="1412" y="803">60</text>
  <text x="1466" y="803">80</text>
  <text x="1519" y="803">100</text>
  <text x="1573" y="803">120</text>
  <text x="1627" y="803">140</text>
  <text x="1680" y="803">160</text>
  <text x="1455" y="825" font-size="13.7">Distance Difference (km)</text>
  <text transform="translate(990.5,612.4) rotate(-90)" font-size="13.5">Magnitude (dB)</text>
 </g>
</svg>

<div class="t" style="left:11.50px;top:18.11px;font-size:17px;color:#d4d4d4;transform:scaleX(0.9994);">Connection</div>
<div class="t" style="left:122.83px;top:18.11px;font-size:17px;color:#d4d4d4;transform:scaleX(0.9674);">Recorder</div>
<div class="t" style="left:215.87px;top:18.11px;font-size:17px;color:#ffffff;transform:scaleX(0.9250);">FC0013</div>
<div class="t" style="left:10.80px;top:56.16px;font-size:18px;color:#fff;transform:scaleX(0.8716);">AGC</div>
<div class="t" style="left:121.40px;top:59.46px;font-size:16px;color:#fff;transform:scaleX(1.0424);">On/Off</div>
<div class="t" style="left:10.80px;top:95.26px;font-size:18px;color:#fff;transform:scaleX(0.9565);">Gain</div>
<div class="t" style="left:10.80px;top:134.26px;font-size:18px;color:#fff;transform:scaleX(0.9946);">Corr.</div>
<div class="t" style="left:9.83px;top:172.26px;font-size:18px;color:#fff;transform:scaleX(0.9688);">Delta</div>
<div class="t" style="left:115.70px;top:133.26px;font-size:18px;color:#e6ffe6;transform:scaleX(1.0991);">042 ppm</div>
<div class="t" style="left:115.70px;top:171.26px;font-size:18px;color:#e6ffe6;transform:scaleX(1.0480);">000 kHz</div>
<div class="t" style="left:376.30px;top:22.14px;font-size:12px;color:#fff;transform:scaleX(0.9974);">Zoom X</div>
<div class="t" style="left:376.30px;top:82.04px;font-size:12px;color:#fff;transform:scaleX(0.9974);">Zoom Y</div>
<div class="t" style="left:388.70px;top:136.64px;font-size:12px;color:#fff;transform:scaleX(0.9768);">Mouse</div>
<div class="t" style="left:388.70px;top:152.74px;font-size:12px;color:#fff;transform:scaleX(0.9797);">Click and Drag Zooms</div>
<div class="t" style="left:5.50px;top:370.66px;font-size:16px;color:#fff;transform:scaleX(0.9428);font-style:italic">DAB+</div>
<div class="t" style="left:63.90px;top:370.80px;font-size:13px;color:#fff;transform:scaleX(0.8688);">7C</div>
<div class="t" style="left:146.63px;top:369.01px;font-size:17px;color:#ff7b70;transform:scaleX(0.8678);">EId: 817C</div>
<div class="t" style="left:233.00px;top:368.81px;font-size:17px;color:#e4ef3c;transform:scaleX(0.9313);">7C Gron / Drent</div>
<div class="t" style="left:365.40px;top:368.81px;font-size:17px;color:#fff;transform:scaleX(0.9375);">2024-12-28</div>
<div class="t" style="left:455.51px;top:368.81px;font-size:17px;color:#fff;transform:scaleX(0.8899);">15:00:08 Z</div>
<div class="t" style="left:679.60px;top:369.01px;font-size:17px;color:#fff;transform:scaleX(0.8766);">SId: 8563</div>
<div class="t" style="left:774.30px;top:362.28px;font-size:24px;color:#f0f020;transform:scaleX(0.9448);">Joy Radio</div>
<div class="t" style="left:905.00px;top:369.01px;font-size:17px;color:#fff;transform:scaleX(0.9315);">64 kbps</div>
<div class="t" style="left:970.17px;top:369.01px;font-size:17px;color:#fff;transform:scaleX(0.8295);">EEP 3-A</div>
<div class="t" style="left:0.00px;top:403.09px;font-size:19.5px;color:#e6f23c;transform:scaleX(0.9612);">Joy Radio</div>
<div class="t" style="left:1.20px;top:436.76px;font-size:16px;color:#fff;transform:scaleX(0.9312);">ArrowClassicRock</div>
<div class="t" style="left:1.20px;top:462.11px;font-size:16px;color:#fff;transform:scaleX(0.9374);">CONTINU</div>
<div class="t" style="left:1.20px;top:487.46px;font-size:16px;color:#fff;transform:scaleX(0.9226);">GIGANTFM</div>
<div class="t" style="left:0.24px;top:512.81px;font-size:16px;color:#fff;transform:scaleX(0.9587);">HITZZZ!!</div>
<div class="t" style="left:1.20px;top:538.16px;font-size:16px;color:#fff;transform:scaleX(0.9347);">Joy Radio</div>
<div class="t" style="left:0.21px;top:563.51px;font-size:16px;color:#fff;transform:scaleX(0.9928);">Magic FM</div>
<div class="t" style="left:0.21px;top:588.86px;font-size:16px;color:#fff;transform:scaleX(0.9875);">Radio Drenthe</div>
<div class="t" style="left:0.19px;top:614.21px;font-size:16px;color:#fff;transform:scaleX(1.0122);">Radio Noord</div>
<div class="t" style="left:0.22px;top:639.56px;font-size:16px;color:#fff;transform:scaleX(0.9785);">RADIONL Groningn</div>
<div class="t" style="left:0.23px;top:664.91px;font-size:16px;color:#fff;transform:scaleX(0.9680);">RADIONL2 Drenthe</div>
<div class="t" style="left:1.20px;top:690.26px;font-size:16px;color:#fff;transform:scaleX(0.9354);">SIMONE FM</div>
<div class="t" style="left:1.20px;top:715.61px;font-size:16px;color:#fff;transform:scaleX(0.9251);">TEAM FM</div>
<div class="t" style="left:1.20px;top:740.96px;font-size:16px;color:#fff;transform:scaleX(0.9600);">Tukker FM</div>
<div class="t" style="left:200.60px;top:403.19px;font-size:19.5px;color:#fff;transform:scaleX(0.9811);">Service Quality</div>
<div class="t" style="left:204.80px;top:446.85px;font-size:14px;color:#fff;transform:scaleX(0.9083);">SNR (dB)</div>
<div class="t" style="left:203.86px;top:477.95px;font-size:14px;color:#fff;transform:scaleX(0.9352);">FIC (ok %)</div>
<div class="t" style="left:203.86px;top:509.15px;font-size:14px;color:#fff;transform:scaleX(0.9352);">RS (ok %)</div>
<div class="t" style="left:203.79px;top:539.05px;font-size:14px;color:#fff;transform:scaleX(1.0084);">Null Symbol</div>
<div class="t" style="left:204.80px;top:570.15px;font-size:14px;color:#fff;transform:scaleX(0.9697);">SymbolTime (ms)</div>
<div class="t" style="left:203.83px;top:600.05px;font-size:14px;color:#fff;transform:scaleX(0.9689);">FrameTime (ms)</div>
<div class="t" style="left:337.00px;top:448.47px;font-size:11.5px;color:#e8e8e8;transform:scaleX(0.9041);">7,4</div>
<div class="t" style="left:336.00px;top:479.47px;font-size:11.5px;color:#e8ffe8;transform:scaleX(0.9579);">100</div>
<div class="t" style="left:340.50px;top:510.47px;font-size:11.5px;color:#e8e8e8;transform:scaleX(1.0833);">0</div>
<div class="t" style="left:333.50px;top:572.19px;font-size:11px;color:#e8e8e8;transform:scaleX(1.2681);">0,20</div>
<div class="t" style="left:333.50px;top:601.77px;font-size:11.5px;color:#e8ffe8;transform:scaleX(0.9688);">81,5</div>
<div class="t" style="left:399.90px;top:410.41px;font-size:17px;color:#dcdcdc;transform:scaleX(0.8800);">Sync</div>
<div class="t" style="left:460.40px;top:410.41px;font-size:17px;color:#fff;transform:scaleX(0.8845);">TII</div>
<div class="t" style="left:504.00px;top:410.41px;font-size:17px;color:#dcdcdc;transform:scaleX(1.0320);">Audio</div>
<div class="t" style="left:574.60px;top:410.41px;font-size:17px;color:#dcdcdc;transform:scaleX(0.9170);">AAC</div>
<div class="t" style="left:632.60px;top:410.41px;font-size:17px;color:#dcdcdc;transform:scaleX(1.0192);">Options</div>
<div class="t" style="left:656.50px;top:450.15px;font-size:14px;color:#fff;transform:scaleX(0.9940);">Threshold</div>
<div class="t" style="left:392.82px;top:480.45px;font-size:14px;color:#fff;transform:scaleX(1.0772);">Pattern</div>
<div class="t" style="left:460.29px;top:480.45px;font-size:14px;color:#fff;transform:scaleX(1.1085);">MainId</div>
<div class="t" style="left:527.40px;top:480.45px;font-size:14px;color:#fff;transform:scaleX(1.0307);">SubId</div>
<div class="t" style="left:585.20px;top:480.45px;font-size:14px;color:#fff;transform:scaleX(1.0741);">Strength</div>
<div class="t" style="left:395.90px;top:510.25px;font-size:14px;color:#fff;transform:scaleX(0.9739);">0x4d</div>
<div class="t" style="left:462.46px;top:510.25px;font-size:14px;color:#fff;transform:scaleX(0.9401);">17</div>
<div class="t" style="left:529.00px;top:510.25px;font-size:14px;color:#fff;transform:scaleX(0.8805);">21</div>
<div class="t" style="left:586.60px;top:510.25px;font-size:14px;color:#fff;transform:scaleX(0.9249);">0.91</div>
<div class="t" style="left:670.40px;top:609.35px;font-size:14px;color:#fff;transform:scaleX(0.9249);">0.04</div>
<div class="t" style="left:1238.40px;top:397.96px;font-size:16px;color:#fff;transform:scaleX(0.8912);">Channel Impulse Response (CIR)</div>
<div class="t" style="left:801.91px;top:428.82px;font-size:12.5px;color:#fff;transform:scaleX(0.8853);">Freeze</div>
<div class="t" style="left:874.00px;top:428.82px;font-size:12.5px;color:#fff;transform:scaleX(0.9387);">Gradient</div>
<div class="t" style="left:790.60px;top:469.62px;font-size:12.5px;color:#fff;transform:scaleX(0.9541);">Smoothing Level</div>
<div class="t" style="left:790.60px;top:523.72px;font-size:12.5px;color:#fff;transform:scaleX(0.9319);">Zoom X</div>
<div class="t" style="left:790.60px;top:573.92px;font-size:12.5px;color:#fff;transform:scaleX(0.9319);">Zoom Y</div>
<div class="t" style="left:790.60px;top:623.42px;font-size:12.5px;color:#fff;transform:scaleX(0.9355);">x-Axis</div>
<div class="t" style="left:814.70px;top:643.42px;font-size:12.5px;color:#fff;transform:scaleX(0.9156);">Samples</div>
<div class="t" style="left:813.76px;top:663.42px;font-size:12.5px;color:#fff;transform:scaleX(0.9375);">Distance</div>
<div class="t" style="left:814.70px;top:683.42px;font-size:12.5px;color:#fff;transform:scaleX(0.9247);">Time</div>
</body></html>
